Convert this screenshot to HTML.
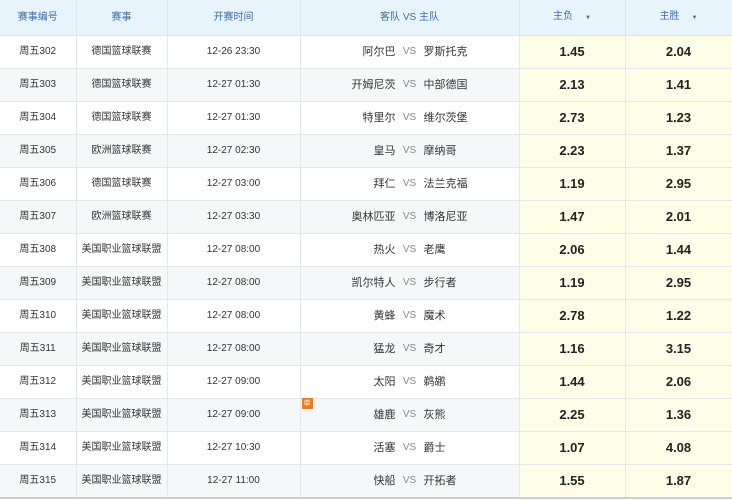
<!DOCTYPE html><html><head><meta charset="utf-8"><style>
body{margin:0;width:732px;height:500px;overflow:hidden;background:#fff;font-family:"Liberation Sans","Noto Sans CJK SC",sans-serif;}
table{border-collapse:collapse;table-layout:fixed;width:732px;}
td,th{height:32px;border-right:1px solid #e3e8ec;border-bottom:1px solid #e3e8ec;text-align:center;vertical-align:middle;font-size:10px;line-height:14px;color:#333;padding:0;font-weight:normal;}
th{height:35px;background:#e8f4fc;color:#3a6ea5;border-color:#d5e6f2;}
tr:nth-child(odd) td{background:#f6f7f8;}
td.o{background:#fefee8!important;font-size:13px;font-weight:bold;color:#222;}
td.m{position:relative}
.t{display:flex;justify-content:center;font-size:11px;align-items:center;line-height:14px}
.t .a{width:95px;text-align:right}.t .h{width:95px;text-align:left}.t .v{width:28px;color:#888;font-size:10px}
tr:last-child td{border-bottom:2px solid #ccc}
.dan{position:absolute;left:1px;top:-1px;width:11px;height:11px;background:#f07a22;color:#fff;font-size:7px;line-height:11px;text-align:center}
.ar{font-size:6px;margin-left:12px}
</style></head><body><table>
<colgroup><col style="width:76px"><col style="width:91px"><col style="width:133px"><col style="width:219px"><col style="width:106px"><col style="width:107px"></colgroup>
<tr><th>赛事编号</th><th>赛事</th><th>开赛时间</th><th>客队 VS 主队</th><th>主负<span class="ar">▼</span></th><th>主胜<span class="ar">▼</span></th></tr>
<tr><td>周五302</td><td>德国篮球联赛</td><td>12-26 23:30</td><td class="m"><div class="t"><span class="a">阿尔巴</span><span class="v">VS</span><span class="h">罗斯托克</span></div></td><td class="o">1.45</td><td class="o">2.04</td></tr>
<tr><td>周五303</td><td>德国篮球联赛</td><td>12-27 01:30</td><td class="m"><div class="t"><span class="a">开姆尼茨</span><span class="v">VS</span><span class="h">中部德国</span></div></td><td class="o">2.13</td><td class="o">1.41</td></tr>
<tr><td>周五304</td><td>德国篮球联赛</td><td>12-27 01:30</td><td class="m"><div class="t"><span class="a">特里尔</span><span class="v">VS</span><span class="h">维尔茨堡</span></div></td><td class="o">2.73</td><td class="o">1.23</td></tr>
<tr><td>周五305</td><td>欧洲篮球联赛</td><td>12-27 02:30</td><td class="m"><div class="t"><span class="a">皇马</span><span class="v">VS</span><span class="h">摩纳哥</span></div></td><td class="o">2.23</td><td class="o">1.37</td></tr>
<tr><td>周五306</td><td>德国篮球联赛</td><td>12-27 03:00</td><td class="m"><div class="t"><span class="a">拜仁</span><span class="v">VS</span><span class="h">法兰克福</span></div></td><td class="o">1.19</td><td class="o">2.95</td></tr>
<tr><td>周五307</td><td>欧洲篮球联赛</td><td>12-27 03:30</td><td class="m"><div class="t"><span class="a">奥林匹亚</span><span class="v">VS</span><span class="h">博洛尼亚</span></div></td><td class="o">1.47</td><td class="o">2.01</td></tr>
<tr><td>周五308</td><td>美国职业篮球联盟</td><td>12-27 08:00</td><td class="m"><div class="t"><span class="a">热火</span><span class="v">VS</span><span class="h">老鹰</span></div></td><td class="o">2.06</td><td class="o">1.44</td></tr>
<tr><td>周五309</td><td>美国职业篮球联盟</td><td>12-27 08:00</td><td class="m"><div class="t"><span class="a">凯尔特人</span><span class="v">VS</span><span class="h">步行者</span></div></td><td class="o">1.19</td><td class="o">2.95</td></tr>
<tr><td>周五310</td><td>美国职业篮球联盟</td><td>12-27 08:00</td><td class="m"><div class="t"><span class="a">黄蜂</span><span class="v">VS</span><span class="h">魔术</span></div></td><td class="o">2.78</td><td class="o">1.22</td></tr>
<tr><td>周五311</td><td>美国职业篮球联盟</td><td>12-27 08:00</td><td class="m"><div class="t"><span class="a">猛龙</span><span class="v">VS</span><span class="h">奇才</span></div></td><td class="o">1.16</td><td class="o">3.15</td></tr>
<tr><td>周五312</td><td>美国职业篮球联盟</td><td>12-27 09:00</td><td class="m"><div class="t"><span class="a">太阳</span><span class="v">VS</span><span class="h">鹈鹕</span></div></td><td class="o">1.44</td><td class="o">2.06</td></tr>
<tr><td>周五313</td><td>美国职业篮球联盟</td><td>12-27 09:00</td><td class="m"><span class="dan">单</span><div class="t"><span class="a">雄鹿</span><span class="v">VS</span><span class="h">灰熊</span></div></td><td class="o">2.25</td><td class="o">1.36</td></tr>
<tr><td>周五314</td><td>美国职业篮球联盟</td><td>12-27 10:30</td><td class="m"><div class="t"><span class="a">活塞</span><span class="v">VS</span><span class="h">爵士</span></div></td><td class="o">1.07</td><td class="o">4.08</td></tr>
<tr><td>周五315</td><td>美国职业篮球联盟</td><td>12-27 11:00</td><td class="m"><div class="t"><span class="a">快船</span><span class="v">VS</span><span class="h">开拓者</span></div></td><td class="o">1.55</td><td class="o">1.87</td></tr>
</table></body></html>
